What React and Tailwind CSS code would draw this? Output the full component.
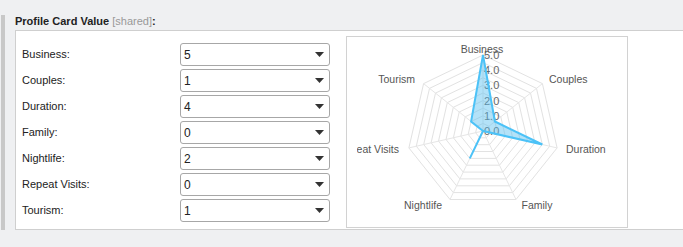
import React from "react";

const fields = [
  { label: "Business", value: 5 },
  { label: "Couples", value: 1 },
  { label: "Duration", value: 4 },
  { label: "Family", value: 0 },
  { label: "Nightlife", value: 2 },
  { label: "Repeat Visits", value: 0 },
  { label: "Tourism", value: 1 },
];

const CX = 126;
const CY = 94;
const R = 76;
const MAX = 5;

const pt = (i, r) => {
  const a = ((-90 + (i * 360) / 7) * Math.PI) / 180;
  return [CX + r * Math.cos(a), CY + r * Math.sin(a)];
};

const ring = (r) =>
  fields.map((_, i) => pt(i, r).map((n) => n.toFixed(1)).join(",")).join(" ");

// label positions were read off the screenshot
const pointLabels = [
  { text: "Business", x: 125, y: 16, anchor: "middle" },
  { text: "Couples", x: 192, y: 46, anchor: "start" },
  { text: "Duration", x: 209, y: 116, anchor: "start" },
  { text: "Family", x: 180, y: 172, anchor: "middle" },
  { text: "Nightlife", x: 66, y: 172, anchor: "middle" },
  { text: "Repeat Visits", x: 42, y: 116, anchor: "end" },
  { text: "Tourism", x: 58, y: 46, anchor: "end" },
];

const Radar = () => {
  const data = fields
    .map((f, i) => pt(i, (f.value / MAX) * R).map((n) => n.toFixed(1)).join(","))
    .join(" ");

  return (
    <svg width="271" height="190" className="block" style={{ fontFamily: "'Liberation Sans', Arial, sans-serif" }}>
      {Array.from({ length: 10 }, (_, k) => (
        <polygon key={k} points={ring(((k + 1) / 10) * R)} fill="none" stroke="#e2e2e2" strokeWidth="1" />
      ))}
      {fields.map((_, i) => {
        const [x, y] = pt(i, R);
        return <line key={i} x1={CX} y1={CY} x2={x} y2={y} stroke="#e6e6e6" strokeWidth="1" />;
      })}
      {[0, 1, 2, 3, 4, 5].map((v) => (
        <text key={v} x={CX + 1} y={CY - (v / MAX) * R + 4} fontSize="11" fill="#666">
          {v.toFixed(1)}
        </text>
      ))}
      <polygon points={data} fill="rgba(86,190,240,0.45)" stroke="#4cc2f7" strokeWidth="2" strokeLinejoin="miter" />
      {pointLabels.map((l) => (
        <text key={l.text} x={l.x} y={l.y} fontSize="10.5" fill="#555" textAnchor={l.anchor}>
          {l.text}
        </text>
      ))}
    </svg>
  );
};

const FakeSelect = ({ value }) => (
  <div className="w-[150px] h-[23px] bg-white border border-[#a7a7a7] rounded-[3px] flex items-center justify-between pl-[3px] pr-[5px]">
    <span className="text-[12px] text-[#222]">{value}</span>
    <svg width="9" height="5" viewBox="0 0 9 5">
      <polygon points="0,0 9,0 4.5,5" fill="#333" />
    </svg>
  </div>
);

export default function App() {
  return (
    <div
      className="bg-[#eff0f2] h-[247px] w-[683px] overflow-hidden pt-[15px]"
      style={{ fontFamily: "'Liberation Sans', Arial, sans-serif" }}
    >
      <div className="flex">
        <div className="ml-[1px] w-[4px] h-[215px] bg-[#c8c8c8] shrink-0" />
        <div className="ml-[10px] flex-1 min-w-0">
          <div className="h-[15px] text-[11px] leading-[13px] text-[#222]">
            <span className="font-bold">Profile Card Value</span>{" "}
            <span className="text-[#999]">[shared]</span>
            <span className="font-bold">:</span>
          </div>
          <div className="h-[200px] bg-white border-l border-t border-b border-[#cfcfcf] flex w-[700px]">
            {/* fields */}
            <div className="pl-[6px] pt-[12px] flex flex-col gap-[3px] shrink-0">
              {fields.map((f) => (
                <div key={f.label} className="flex items-center h-[23px]">
                  <div className="w-[158px] text-[11px] text-[#222]">{f.label}:</div>
                  <FakeSelect value={f.value} />
                </div>
              ))}
            </div>
            {/* chart */}
            <div className="ml-[16px] mt-[5px] w-[282px] h-[192px] shrink-0 border border-[#d2d2d2] bg-white overflow-hidden pl-[10px]">
              <Radar />
            </div>
          </div>
        </div>
      </div>
    </div>
  );
}
